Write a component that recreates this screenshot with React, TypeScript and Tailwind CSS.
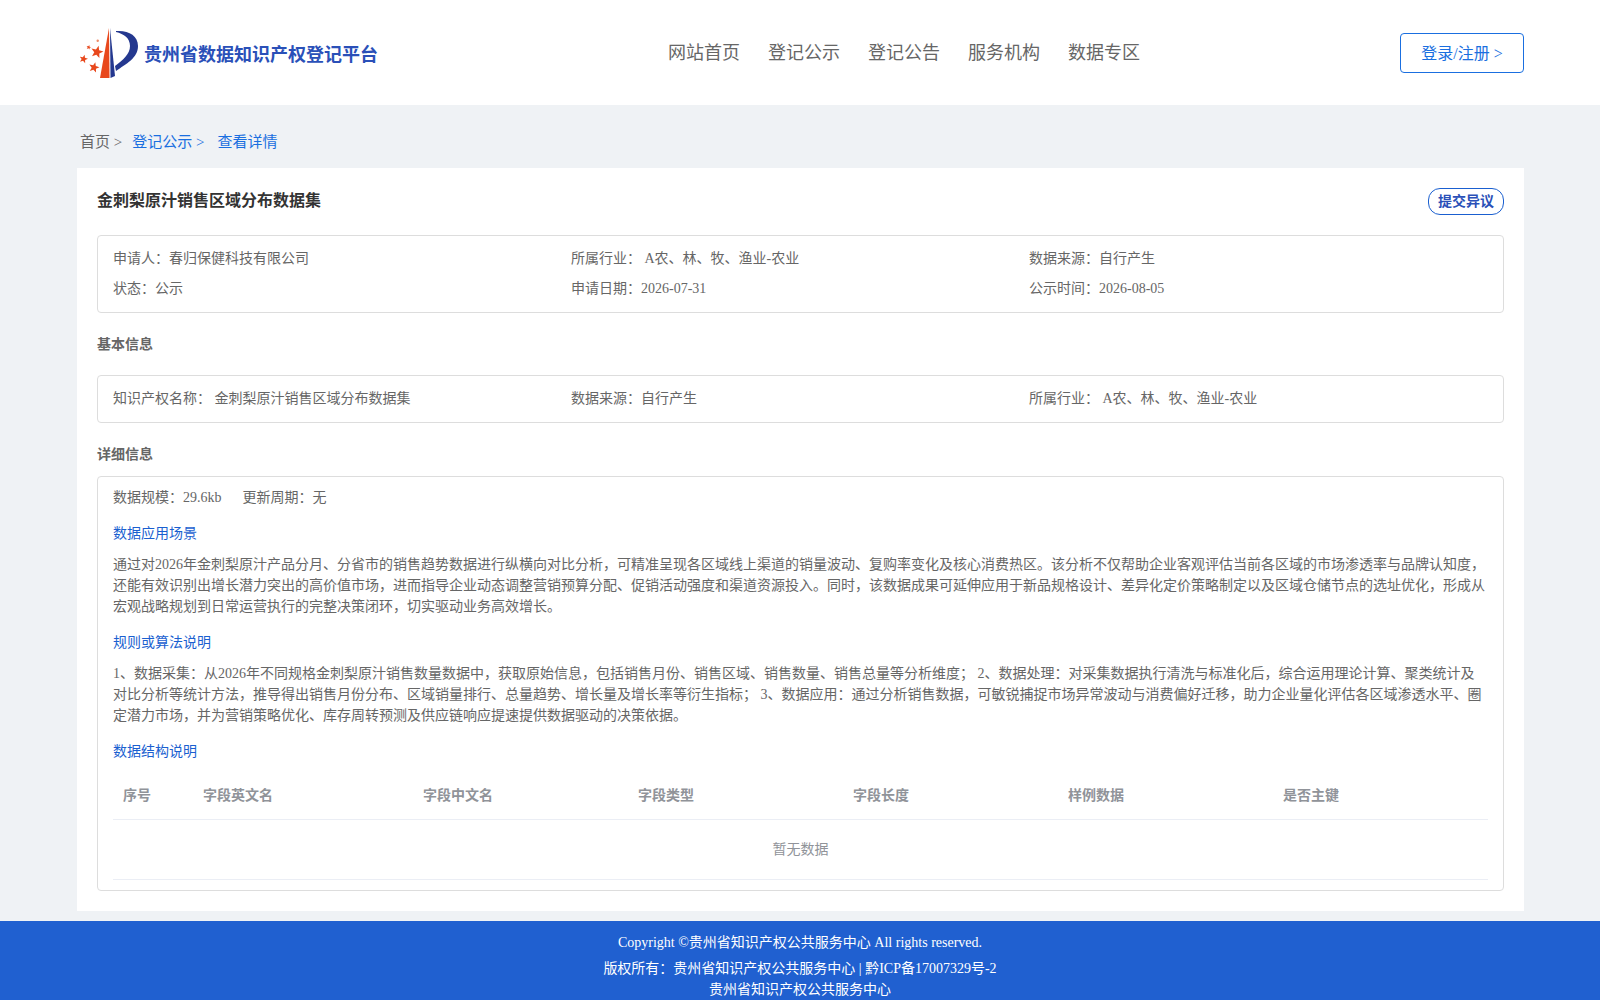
const infoCell = 'w-[458px] h-[30px] leading-[30px]'
const columns = [
  { title: '序号', width: 'w-[80px]' },
  { title: '字段英文名', width: 'w-[220px]' },
  { title: '字段中文名', width: 'w-[215px]' },
  { title: '字段类型', width: 'w-[215px]' },
  { title: '字段长度', width: 'w-[215px]' },
  { title: '样例数据', width: 'w-[215px]' },
  { title: '是否主键', width: 'w-[215px]' }
]

const starPoints = (cx: number, cy: number, r: number): string => {
  const pts: string[] = []
  for (let i = 0; i < 10; i++) {
    const radius = i % 2 === 0 ? r : r * 0.42
    const angle = -Math.PI / 2 + 0.25 + (i * Math.PI) / 5
    pts.push(`${cx + radius * Math.cos(angle)},${cy + radius * Math.sin(angle)}`)
  }
  return pts.join(' ')
}

const Logo = (): JSX.Element => (
  <svg width="58" height="50" viewBox="0 0 58 50" className="shrink-0">
    <path d="M29 0 L20 50 L29.5 50 Z" fill="#e8481c" />
    <path d="M30 0 L30.5 50 L35 48 Z" fill="#24388f" />
    <path d="M36 3 C48 2 58 7 58 18 C58 30 46 36 36 43 L35 38 C43 32 50 26 50 18 C50 10 44 6 36 4 Z" fill="#24388f" />
    <polygon points={starPoints(17, 24, 6.5)} fill="#e8481c" />
    <polygon points={starPoints(3.5, 31, 4.5)} fill="#e8481c" />
    <polygon points={starPoints(14, 39.5, 5.5)} fill="#e8481c" />
    <polygon points={starPoints(8.7, 19.3, 2.5)} fill="#e8481c" />
    <circle cx="17.7" cy="12.7" r="1.2" fill="#ee8a66" />
  </svg>
)

export default function App (): JSX.Element {
  return (
    <div className="min-h-[1000px] bg-[#eff2f5] font-['Liberation_Serif','Noto_Sans_CJK_SC',serif] text-[14px] text-[#666]">
      <header className="h-[105px] bg-white flex items-center pl-[80px] pr-[76px]">
        <div className="flex items-center w-[380px] gap-[6px]">
          <Logo />
          <span className="text-[18px] font-bold text-[#2a50b8] mt-[5px]">贵州省数据知识产权登记平台</span>
        </div>
        <nav className="flex gap-[28px] text-[18px] text-[#666] ml-[208px] mt-[1px]">
          <span>网站首页</span>
          <span>登记公示</span>
          <span>登记公告</span>
          <span>服务机构</span>
          <span>数据专区</span>
        </nav>
        <button className="ml-auto w-[124px] h-[40px] border border-[#1a6fe0] rounded-[4px] text-[16px] text-[#1a6fe0] pt-[2px]">登录/注册 &gt;</button>
      </header>

      <div className="pl-[80px] h-[63px] pt-[12px] flex items-center text-[15px]">
        <span>首页 &gt;</span>
        <span className="text-[#1a6fe0] ml-[10px]">登记公示 &gt;</span>
        <span className="text-[#1a6fe0] ml-[13px]">查看详情</span>
      </div>

      <main className="ml-[77px] w-[1447px] h-[743px] bg-white px-[20px] pt-[20px]">
        <div className="flex justify-between h-[27px]">
          <h1 className="text-[16px] font-bold text-[#333] leading-[26px]">金刺梨原汁销售区域分布数据集</h1>
          <button className="w-[76px] h-[27px] border border-[#1a5fd0] rounded-[12px] text-[14px] font-bold text-[#2a50b8] leading-none">提交异议</button>
        </div>

        <div className="mt-[20px] h-[78px] border border-[#ddd] rounded-[4px] px-[15px] pt-[8px]">
          <div className="flex">
            <div className={infoCell}>申请人：春归保健科技有限公司</div>
            <div className={infoCell}>所属行业： A农、林、牧、渔业-农业</div>
            <div className={infoCell}>数据来源：自行产生</div>
          </div>
          <div className="flex">
            <div className={infoCell}>状态：公示</div>
            <div className={infoCell}>申请日期：2026-07-31</div>
            <div className={infoCell}>公示时间：2026-08-05</div>
          </div>
        </div>

        <h2 className="mt-[21px] text-[14px] font-bold leading-[21px]">基本信息</h2>
        <div className="mt-[20px] h-[48px] border border-[#ddd] rounded-[4px] px-[15px] pt-[8px] flex">
          <div className={infoCell}>知识产权名称： 金刺梨原汁销售区域分布数据集</div>
          <div className={infoCell}>数据来源：自行产生</div>
          <div className={infoCell}>所属行业： A农、林、牧、渔业-农业</div>
        </div>

        <h2 className="mt-[21px] text-[14px] font-bold leading-[21px]">详细信息</h2>
        <div className="mt-[11px] h-[415px] border border-[#ddd] rounded-[4px] px-[15px] pt-[10px]">
          <div className="leading-[21px]">
            <span>数据规模：29.6kb</span>
            <span className="ml-[21px]">更新周期：无</span>
          </div>
          <div className="mt-[15px] text-[#1a5fd0] leading-[21px]">数据应用场景</div>
          <p className="mt-[10px] leading-[21px]">通过对2026年金刺梨原汁产品分月、分省市的销售趋势数据进行纵横向对比分析，可精准呈现各区域线上渠道的销量波动、复购率变化及核心消费热区。该分析不仅帮助企业客观评估当前各区域的市场渗透率与品牌认知度，还能有效识别出增长潜力突出的高价值市场，进而指导企业动态调整营销预算分配、促销活动强度和渠道资源投入。同时，该数据成果可延伸应用于新品规格设计、差异化定价策略制定以及区域仓储节点的选址优化，形成从宏观战略规划到日常运营执行的完整决策闭环，切实驱动业务高效增长。</p>
          <div className="mt-[15px] text-[#1a5fd0] leading-[21px]">规则或算法说明</div>
          <p className="mt-[10px] leading-[21px]">1、数据采集：从2026年不同规格金刺梨原汁销售数量数据中，获取原始信息，包括销售月份、销售区域、销售数量、销售总量等分析维度； 2、数据处理：对采集数据执行清洗与标准化后，综合运用理论计算、聚类统计及对比分析等统计方法，推导得出销售月份分布、区域销量排行、总量趋势、增长量及增长率等衍生指标； 3、数据应用：通过分析销售数据，可敏锐捕捉市场异常波动与消费偏好迁移，助力企业量化评估各区域渗透水平、圈定潜力市场，并为营销策略优化、库存周转预测及供应链响应提速提供数据驱动的决策依据。</p>
          <div className="mt-[15px] text-[#1a5fd0] leading-[21px]">数据结构说明</div>
          <div className="mt-[10px]">
            <div className="flex h-[48px] items-center border-b border-[#ebeef5] font-bold text-[#909399]">
              {columns.map((col) => (
                <div key={col.title} className={`${col.width} px-[10px]`}>{col.title}</div>
              ))}
            </div>
            <div className="h-[60px] flex items-center justify-center border-b border-[#ebeef5] text-[#909399]">暂无数据</div>
          </div>
        </div>
      </main>

      <footer className="mt-[10px] h-[79px] bg-[#2060d0] text-white text-center text-[14px] pt-[11px]">
        <div className="leading-[21px]">Copyright ©贵州省知识产权公共服务中心 All rights reserved.</div>
        <div className="mt-[5px] leading-[21px]">版权所有：贵州省知识产权公共服务中心 | 黔ICP备17007329号-2</div>
        <div className="leading-[21px]">贵州省知识产权公共服务中心</div>
      </footer>
    </div>
  )
}
